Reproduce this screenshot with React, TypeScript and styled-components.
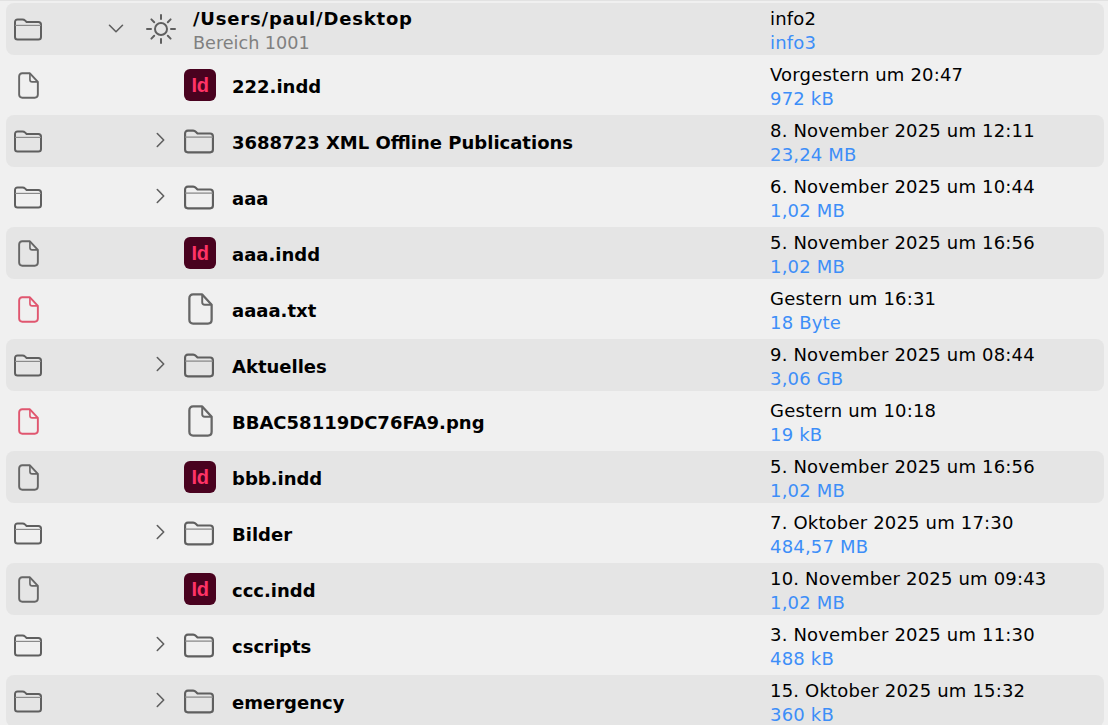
import { createGlobalStyle, styled } from "styled-components";

type Kind = "folder" | "file" | "indd";

const rows: { name: string; kind: Kind; date: string; size: string; flagged?: boolean }[] = [
  { name: "222.indd", kind: "indd", date: "Vorgestern um 20:47", size: "972 kB" },
  { name: "3688723 XML Offline Publications", kind: "folder", date: "8. November 2025 um 12:11", size: "23,24 MB" },
  { name: "aaa", kind: "folder", date: "6. November 2025 um 10:44", size: "1,02 MB" },
  { name: "aaa.indd", kind: "indd", date: "5. November 2025 um 16:56", size: "1,02 MB" },
  { name: "aaaa.txt", kind: "file", date: "Gestern um 16:31", size: "18 Byte", flagged: true },
  { name: "Aktuelles", kind: "folder", date: "9. November 2025 um 08:44", size: "3,06 GB" },
  { name: "BBAC58119DC76FA9.png", kind: "file", date: "Gestern um 10:18", size: "19 kB", flagged: true },
  { name: "bbb.indd", kind: "indd", date: "5. November 2025 um 16:56", size: "1,02 MB" },
  { name: "Bilder", kind: "folder", date: "7. Oktober 2025 um 17:30", size: "484,57 MB" },
  { name: "ccc.indd", kind: "indd", date: "10. November 2025 um 09:43", size: "1,02 MB" },
  { name: "cscripts", kind: "folder", date: "3. November 2025 um 11:30", size: "488 kB" },
  { name: "emergency", kind: "folder", date: "15. Oktober 2025 um 15:32", size: "360 kB" },
];

const FolderIcon = ({ width, height }: { width: number; height: number }) => (
  <svg width={width} height={height} viewBox="0 0 28 23" fill="none" stroke="#5f5f5f" strokeLinejoin="round">
    <path
      strokeWidth="2"
      d="M1 4C1 2.4 2 1.4 3.6 1.4H8.5C9.8 1.4 10.4 1.8 11.2 2.6L12.6 4H24.4C26 4 27 5 27 6.6V19C27 20.6 26 21.6 24.4 21.6H3.6C2 21.6 1 20.6 1 19V4Z"
    />
    <path strokeWidth="1.2" stroke="#8a8a8a" d="M1 7.4H27" />
  </svg>
);

const FileIcon = ({ width, height, color }: { width: number; height: number; color: string }) => (
  <svg width={width} height={height} viewBox="0 0 22 28" fill="none" stroke={color} strokeWidth="2" strokeLinejoin="round">
    <path d="M4.5 1.2H12.5L20.8 10.2V23.5C20.8 25.6 19.6 26.8 17.5 26.8H4.5C2.4 26.8 1.2 25.6 1.2 23.5V4.5C1.2 2.4 2.4 1.2 4.5 1.2Z" />
    <path strokeWidth="1.7" d="M12.5 1.2V8C12.5 9.5 13.3 10.2 14.8 10.2H20.8" />
  </svg>
);

const SunIcon = () => (
  <svg width="32" height="32" viewBox="0 0 32 32" fill="none" stroke="#5f5f5f" strokeWidth="2" strokeLinecap="round">
    <circle cx="16" cy="16" r="6" />
    <path d="M16 2V6M16 26V30M2 16H6M26 16H30M6.4 6.4L9.2 9.2M22.8 22.8L25.6 25.6M25.6 6.4L22.8 9.2M9.2 22.8L6.4 25.6" />
  </svg>
);

const ChevronRight = () => (
  <svg width="9" height="16" viewBox="0 0 9 16" fill="none" stroke="#5f5f5f" strokeWidth="1.6" strokeLinecap="round" strokeLinejoin="round">
    <path d="M1.3 1.5L7.7 8L1.3 14.5" />
  </svg>
);

const ChevronDown = () => (
  <svg width="16" height="9" viewBox="0 0 16 9" fill="none" stroke="#5f5f5f" strokeWidth="1.6" strokeLinecap="round" strokeLinejoin="round">
    <path d="M1.5 1.3L8 7.7L14.5 1.3" />
  </svg>
);

export default function App() {
  return (
    <>
      <GlobalStyle />
      <List>
        <Row $shaded>
          <StatusCell>
            <FolderIcon width={28} height={23} />
          </StatusCell>
          <TreeCell $indent={54}>
            <Toggle>
              <ChevronDown />
            </Toggle>
            <HeaderIcon>
              <SunIcon />
            </HeaderIcon>
            <TextStack>
              <PathTitle>/Users/paul/Desktop</PathTitle>
              <SubTitle>Bereich 1001</SubTitle>
            </TextStack>
          </TreeCell>
          <InfoCell>
            <InfoTop>info2</InfoTop>
            <InfoBottom>info3</InfoBottom>
          </InfoCell>
        </Row>
        {rows.map((row, i) => (
          <Row key={row.name} $shaded={i % 2 === 1}>
            <StatusCell>
              {row.kind === "folder" ? (
                <FolderIcon width={28} height={23} />
              ) : (
                <FileIcon width={21} height={27} color={row.flagged ? "#e0566f" : "#666"} />
              )}
            </StatusCell>
            <TreeCell $indent={98}>
              <Toggle>{row.kind === "folder" && <ChevronRight />}</Toggle>
              <ItemIcon $start={row.kind === "folder"}>
                {row.kind === "folder" && <FolderIcon width={30} height={25} />}
                {row.kind === "file" && <FileIcon width={25} height={32} color="#666" />}
                {row.kind === "indd" && <InddBadge>Id</InddBadge>}
              </ItemIcon>
              <Name>{row.name}</Name>
            </TreeCell>
            <InfoCell>
              <InfoTop>{row.date}</InfoTop>
              <InfoBottom>{row.size}</InfoBottom>
            </InfoCell>
          </Row>
        ))}
      </List>
    </>
  );
}

const GlobalStyle = createGlobalStyle`
  html, body {
    margin: 0;
    height: 100%;
    overflow: hidden;
    background: #f0f0f0;
  }
  body {
    font-family: "DejaVu Sans", Verdana, sans-serif;
    color: #000;
  }
`;

const List = styled.div`
  display: flex;
  flex-direction: column;
  gap: 4px;
  padding: 2px 4px 0 6px;
  border-top: 1px solid #e2e2e2;
`;

const Row = styled.div<{ $shaded?: boolean }>`
  display: flex;
  align-items: center;
  flex: none;
  height: 52px;
  border-radius: 8px;
  background: ${({ $shaded }) => ($shaded ? "#e5e5e5" : "transparent")};
`;

const StatusCell = styled.div`
  flex: none;
  width: 44px;
  display: flex;
  justify-content: center;
  align-items: center;
`;

const TreeCell = styled.div<{ $indent: number }>`
  flex: 1;
  min-width: 0;
  display: flex;
  align-items: center;
  padding-left: ${({ $indent }) => $indent}px;
`;

const Toggle = styled.div`
  flex: none;
  width: 24px;
  padding-bottom: 2px;
  display: flex;
  justify-content: center;
  align-items: center;
`;

const HeaderIcon = styled.div`
  flex: none;
  display: flex;
  margin: 0 16px 0 17px;
`;

const ItemIcon = styled.div<{ $start?: boolean }>`
  flex: none;
  width: 32px;
  display: flex;
  justify-content: ${({ $start }) => ($start ? "flex-start" : "center")};
  align-items: center;
  margin: 0 16px 0 12px;
`;

const TextStack = styled.div`
  display: flex;
  flex-direction: column;
  padding-top: 4px;
`;

const PathTitle = styled.div`
  font-size: 18px;
  line-height: 24px;
  font-weight: 700;
  letter-spacing: 0.8px;
`;

const SubTitle = styled.div`
  font-size: 17.6px;
  line-height: 24px;
  color: #808080;
`;

const Name = styled.div`
  font-size: 18px;
  line-height: 24px;
  font-weight: 700;
  white-space: nowrap;
  padding-top: 4px;
`;

const InddBadge = styled.div`
  width: 32px;
  height: 32px;
  border-radius: 6px;
  background: #49021f;
  color: #ff3366;
  font-family: "Liberation Sans", Arial, sans-serif;
  font-size: 20px;
  font-weight: 700;
  letter-spacing: -0.5px;
  line-height: 32px;
  text-align: center;
`;

const InfoCell = styled.div`
  flex: none;
  width: 334px;
  display: flex;
  flex-direction: column;
  padding-top: 4px;
`;

const InfoTop = styled.div`
  font-size: 18px;
  line-height: 24px;
  letter-spacing: 0.18px;
  white-space: nowrap;
`;

const InfoBottom = styled.div`
  font-size: 18px;
  line-height: 24px;
  letter-spacing: 0.18px;
  color: #3d8ef8;
  white-space: nowrap;
`;
